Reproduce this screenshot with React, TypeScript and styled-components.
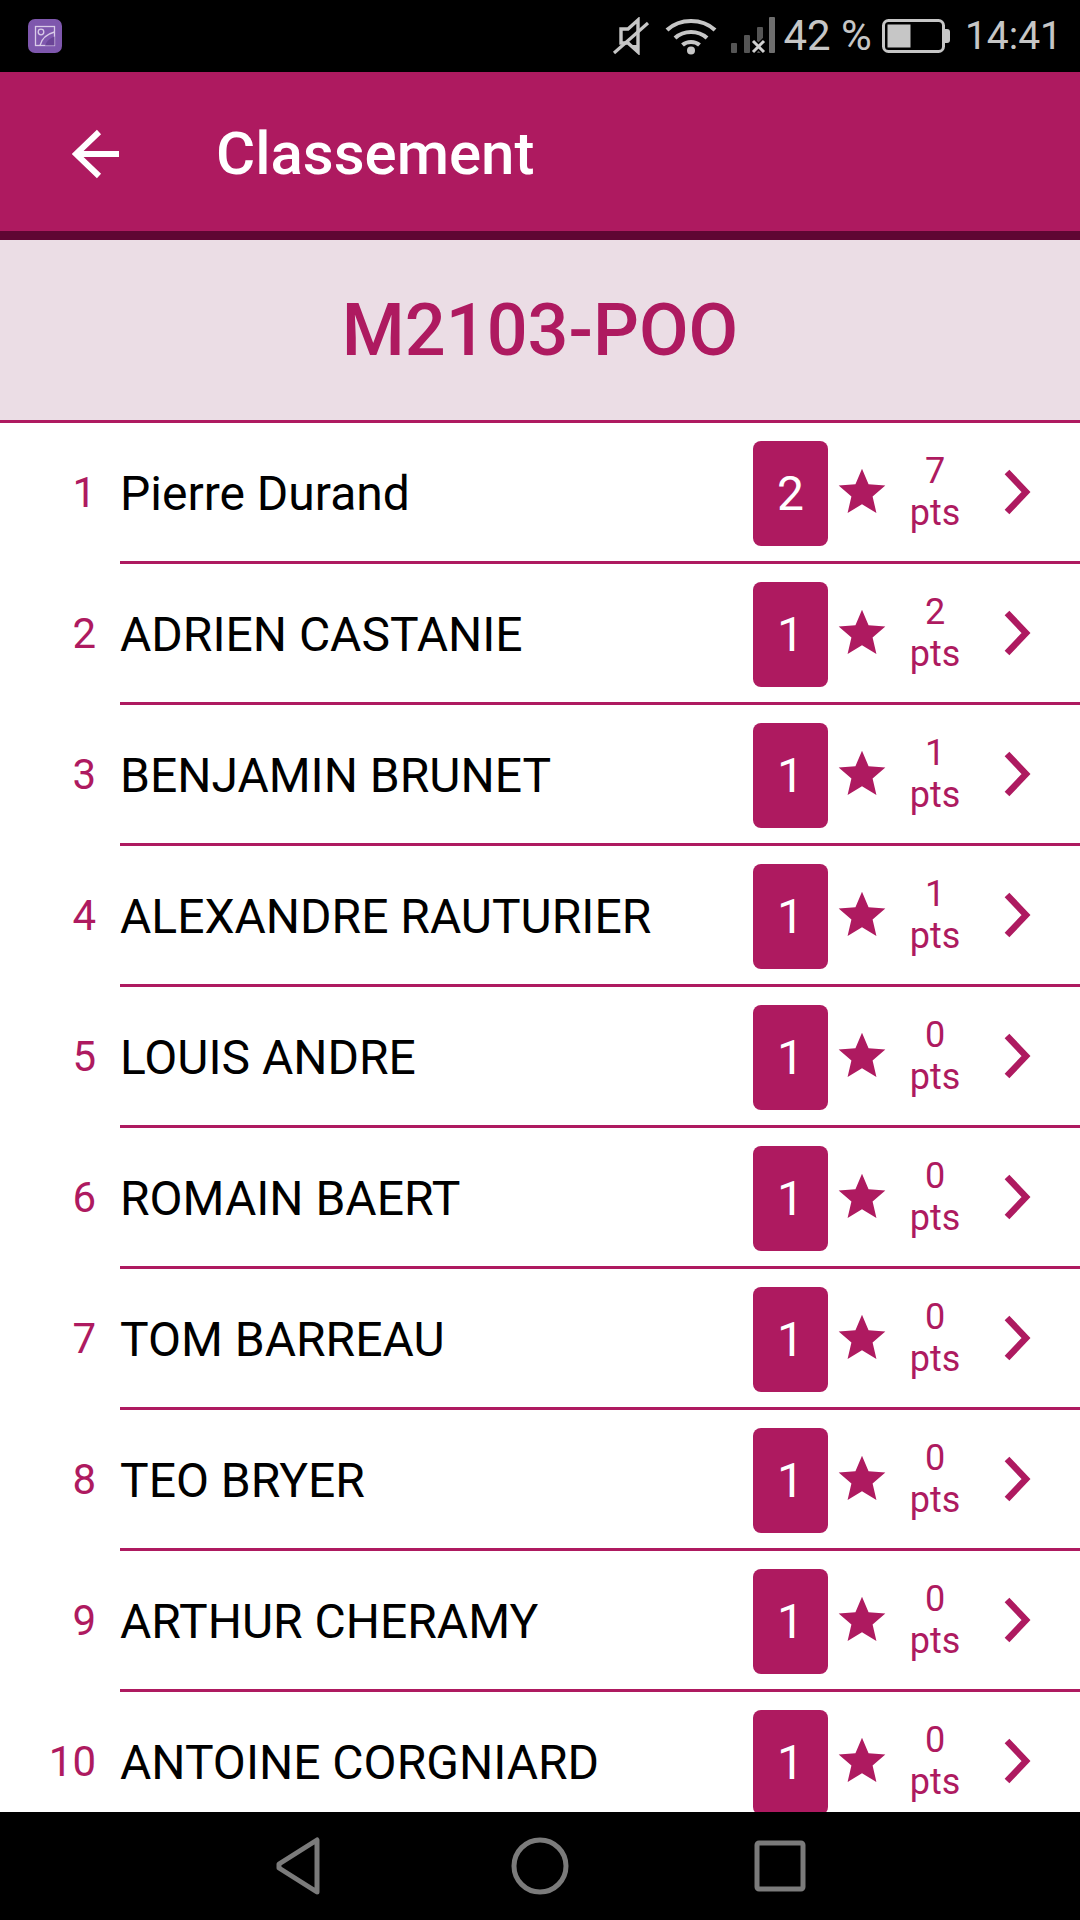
import React from "react";
import styled, { createGlobalStyle } from "styled-components";

const PRIMARY = "#ae1a60";

const Global = createGlobalStyle`
  html, body { margin: 0; padding: 0; background: #fff; }
  * { box-sizing: border-box; }
  body { font-family: Roboto, "Liberation Sans", sans-serif; }
`;

const Page = styled.div`
  width: 1080px;
  height: 1920px;
  display: flex;
  flex-direction: column;
  overflow: hidden;
  background: #fff;
`;

const StatusBar = styled.div`
  height: 72px;
  flex: none;
  background: #000;
  display: flex;
  align-items: center;
  justify-content: space-between;
  padding: 0 18px 0 28px;
  color: #c6c6c6;
`;

const StatusGroup = styled.div`
  display: flex;
  align-items: center;
`;

const AppIcon = styled.svg`
  display: block;
  width: 34px;
  height: 34px;
`;

const StatusIcon = styled.svg<{ $left: number }>`
  display: block;
  flex: none;
  margin-left: ${(p) => p.$left}px;
`;

const StatusText = styled.span<{ $left: number; $size: number }>`
  font-size: ${(p) => p.$size}px;
  line-height: 72px;
  margin-left: ${(p) => p.$left}px;
  white-space: nowrap;
`;

const Header = styled.header`
  height: 168px;
  flex: none;
  background: ${PRIMARY};
  border-bottom: 9px solid #5f0633;
  display: flex;
  align-items: center;
  padding: 4px 0 0 72px;
`;

const BackIcon = styled.svg`
  display: block;
  width: 48px;
  height: 50px;
  flex: none;
`;

const Title = styled.h1`
  margin: 0 0 0 96px;
  color: #fff;
  font-size: 60px;
  font-weight: 500;
`;

const Banner = styled.div`
  height: 183px;
  flex: none;
  background: #ebdde5;
  border-bottom: 3px solid ${PRIMARY};
  display: flex;
  align-items: center;
  justify-content: center;
  color: ${PRIMARY};
  font-size: 72px;
  font-weight: 500;
`;

const List = styled.div`
  flex: 1;
  min-height: 0;
  overflow: hidden;
`;

const Row = styled.div`
  display: flex;
  height: 141px;
`;

const Rank = styled.div`
  width: 96px;
  flex: none;
  display: flex;
  align-items: center;
  justify-content: flex-end;
  color: ${PRIMARY};
  font-size: 42px;
  padding-bottom: 2px;
`;

const RowBody = styled.div`
  flex: 1;
  margin-left: 24px;
  display: flex;
  align-items: center;
  border-bottom: 3px solid ${PRIMARY};
  padding: 2px 46px 0 0;
`;

const Name = styled.div`
  flex: 1;
  font-size: 48px;
  color: #000;
  white-space: nowrap;
`;

const Badge = styled.div`
  width: 75px;
  height: 105px;
  flex: none;
  border-radius: 8px;
  background: ${PRIMARY};
  color: #fff;
  font-size: 48px;
  display: flex;
  align-items: center;
  justify-content: center;
`;

const Star = styled.svg`
  display: block;
  width: 56px;
  height: 56px;
  flex: none;
  margin: 0 0 2px 6px;
  fill: ${PRIMARY};
`;

const Points = styled.div`
  width: 82px;
  flex: none;
  margin: 0 28px 2px 4px;
  text-align: center;
  color: ${PRIMARY};
  font-size: 36px;
  line-height: 42px;
`;

const Chevron = styled.svg`
  display: block;
  width: 30px;
  height: 46px;
  flex: none;
  margin-bottom: 2px;
  fill: none;
  stroke: ${PRIMARY};
  stroke-width: 6.5;
`;

const NavBar = styled.div`
  height: 108px;
  flex: none;
  background: #000;
  display: flex;
  align-items: center;
  justify-content: center;
`;

const NavSlot = styled.div`
  width: 240px;
  display: flex;
  justify-content: center;
`;

const NavIcon = styled.svg`
  display: block;
  width: 60px;
  height: 60px;
  fill: none;
  stroke: #7b7b7b;
  stroke-width: 5;
`;

const players: [string, number, number][] = [
  ["Pierre Durand", 2, 7],
  ["ADRIEN CASTANIE", 1, 2],
  ["BENJAMIN BRUNET", 1, 1],
  ["ALEXANDRE RAUTURIER", 1, 1],
  ["LOUIS ANDRE", 1, 0],
  ["ROMAIN BAERT", 1, 0],
  ["TOM BARREAU", 1, 0],
  ["TEO BRYER", 1, 0],
  ["ARTHUR CHERAMY", 1, 0],
  ["ANTOINE CORGNIARD", 1, 0],
];

export default function App() {
  return (
    <Page>
      <Global />
      <StatusBar>
        <AppIcon viewBox="0 0 34 34">
          <rect width="34" height="34" rx="7" fill="#7e57ad" />
          <g fill="none" stroke="#d9cbe8" strokeWidth="1.3">
            <rect x="7.5" y="7.5" width="19" height="19" />
            <circle cx="13" cy="13" r="2.8" />
            <path d="M26.5 13C19 15 13.5 20 12 26.5" />
          </g>
          <path d="M26.5 17.5C22 19 18.5 22 17 26.5H26.5Z" fill="#6a4497" />
        </AppIcon>
        <StatusGroup>
          <StatusIcon $left={0} width="38" height="38" viewBox="0 0 38 38">
            <path d="M9 12h7l10-9v32l-10-9H9z" fill="none" stroke="#c6c6c6" strokeWidth="3.4" />
            <path d="M26 28v7l-8-7z" fill="#c6c6c6" />
            <path d="M2 36L36 6" stroke="#c6c6c6" strokeWidth="3.2" />
          </StatusIcon>
          <StatusIcon $left={15} width="52" height="38" viewBox="0 0 52 38">
            <g fill="none" stroke="#c6c6c6" strokeWidth="4.2">
              <path d="M2 13C15 1 37 1 50 13" />
              <path d="M10 21C19 13 33 13 42 21" />
              <path d="M17.5 28C22 24 30 24 34.500 28" />
            </g>
            <circle cx="26" cy="33.500" r="4" fill="#c6c6c6" />
          </StatusIcon>
          <StatusIcon $left={14} width="44" height="38" viewBox="0 0 44 38">
            <rect x="0" y="26" width="6" height="10" rx="1" fill="#555" />
            <rect x="13" y="18" width="6" height="18" rx="1" fill="#555" />
            <rect x="26" y="10" width="6" height="26" rx="1" fill="#555" />
            <rect x="38" y="0" width="6" height="36" rx="1" fill="#6e6e6e" />
            <path d="M21 23L34 36M34 23L21 36" stroke="#000" strokeWidth="6" />
            <path d="M22 24L33 35M33 24L22 35" stroke="#d0d0d0" strokeWidth="3" />
          </StatusIcon>
          <StatusText $left={8} $size={42}>42 %</StatusText>
          <StatusIcon $left={10} width="68" height="34" viewBox="0 0 68 34">
            <rect x="1.500" y="1.500" width="60" height="31" rx="5" fill="none" stroke="#c6c6c6" strokeWidth="3" />
            <rect x="5.500" y="5.500" width="23" height="23" fill="#c6c6c6" />
            <path d="M63 10h2a3 3 0 0 1 3 3v8a3 3 0 0 1-3 3h-2z" fill="#c6c6c6" />
          </StatusIcon>
          <StatusText $left={15} $size={39}>14:41</StatusText>
        </StatusGroup>
      </StatusBar>
      <Header>
        <BackIcon viewBox="0 0 48 50" fill="none" stroke="#fff" strokeWidth="6">
          <path d="M47 25H4" />
          <path d="M27 3L4 25L27 47" />
        </BackIcon>
        <Title>Classement</Title>
      </Header>
      <Banner>M2103-POO</Banner>
      <List>
        {players.map(([name, level, pts], i) => (
          <Row key={name}>
            <Rank>{i + 1}</Rank>
            <RowBody>
              <Name>{name}</Name>
              <Badge>{level}</Badge>
              <Star viewBox="0 0 24 24">
                <path d="M12 17.270L18.180 21l-1.640-7.030L22 9.240l-7.190-.61L12 2 9.190 8.630 2 9.240l5.460 4.730L5.820 21z" />
              </Star>
              <Points>
                {pts}
                <br />
                pts
              </Points>
              <Chevron viewBox="0 0 30 46">
                <path d="M3 3L22 23L3 43" />
              </Chevron>
            </RowBody>
          </Row>
        ))}
      </List>
      <NavBar>
        <NavSlot>
          <NavIcon viewBox="0 0 60 60" strokeLinejoin="round">
            <path d="M47 4V56L9 32V28Z" />
          </NavIcon>
        </NavSlot>
        <NavSlot>
          <NavIcon viewBox="0 0 60 60">
            <circle cx="30" cy="30" r="26" />
          </NavIcon>
        </NavSlot>
        <NavSlot>
          <NavIcon viewBox="0 0 60 60" strokeLinejoin="round">
            <rect x="7" y="7" width="46" height="46" rx="2" />
          </NavIcon>
        </NavSlot>
      </NavBar>
    </Page>
  );
}
